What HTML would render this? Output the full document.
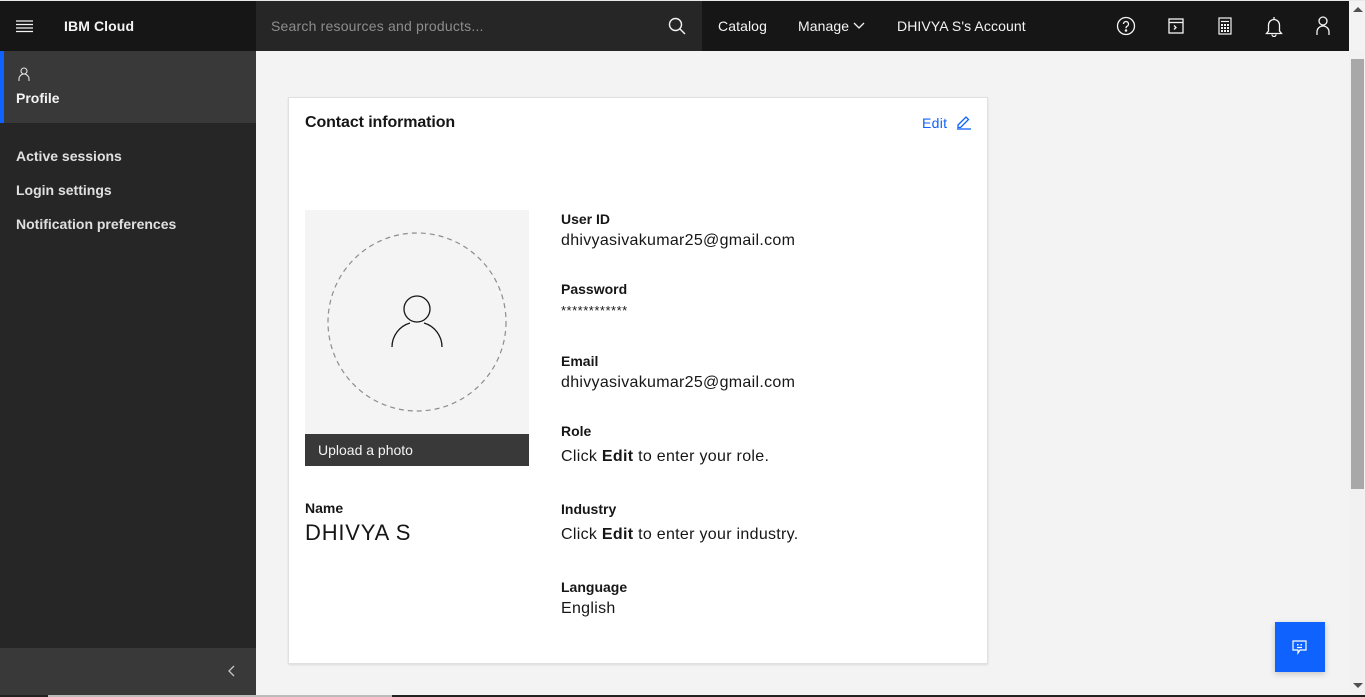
<!DOCTYPE html>
<html><head><meta charset="utf-8"><style>
*{box-sizing:border-box;margin:0;padding:0}
body{width:1365px;height:697px;overflow:hidden;background:#f3f3f3;font-family:"Liberation Sans",sans-serif;position:relative}
.hdr{position:absolute;left:0;top:1px;width:1349px;height:50px;background:#161616;color:#f4f4f4}
.top0{position:absolute;left:0;top:0;width:1365px;height:1px;background:#e8e8e8}
.search{position:absolute;left:256px;top:0;width:446px;height:50px;background:#262626}
.search span{position:absolute;left:15px;top:17px;color:#8d8d8d;font-size:14px;letter-spacing:.2px}
.ht{position:absolute;top:17px;font-size:14px;color:#f4f4f4;letter-spacing:.1px}
.side{position:absolute;left:0;top:51px;width:256px;height:646px;background:#262626}
.prof{position:absolute;left:0;top:0;width:256px;height:72px;background:#393939;border-left:4px solid #0f62fe}
.side .it{position:absolute;left:16px;color:#e0e0e0;font-size:14px;font-weight:bold}
.sbot{position:absolute;left:0;top:597px;width:256px;height:49px;background:#393939}
.card{position:absolute;left:288px;top:97px;width:700px;height:567px;background:#fff;border:1px solid #e0e0e0;box-shadow:0 1px 2px rgba(0,0,0,.1)}
.lbl{position:absolute;font-size:14px;font-weight:bold;color:#161616}
.val{position:absolute;font-size:16px;color:#161616;letter-spacing:.3px}
.sb{position:absolute;left:1349px;top:51px;width:16px;height:645px;background:#f1f1f1}
.thumb{position:absolute;left:1351px;top:59px;width:13px;height:430px;background:#a8a8a8}
</style></head><body>
<div class="top0"></div>
<div class="hdr">
 <svg style="position:absolute;left:16px;top:18px" width="17" height="14"><g stroke="#f4f4f4" stroke-width="1.3"><line x1="0" y1="2" x2="17" y2="2"/><line x1="0" y1="5.5" x2="17" y2="5.5"/><line x1="0" y1="9" x2="17" y2="9"/><line x1="0" y1="12.5" x2="17" y2="12.5"/></g></svg>
 <div class="ht" style="left:64px;font-weight:bold">IBM Cloud</div>
 <div class="search"><span>Search resources and products...</span>
  <svg style="position:absolute;left:412px;top:16px" width="18" height="18" fill="none" stroke="#f4f4f4" stroke-width="1.4"><circle cx="7.5" cy="7.5" r="6"/><line x1="12" y1="12" x2="17" y2="17"/></svg></div>
 <div class="ht" style="left:718px">Catalog</div>
 <div class="ht" style="left:798px">Manage</div>
 <svg style="position:absolute;left:853px;top:21px" width="12" height="8" fill="none" stroke="#f4f4f4" stroke-width="1.3"><path d="M1 1l5 5 5-5"/></svg>
 <div class="ht" style="left:897px">DHIVYA S's Account</div>
 <svg style="position:absolute;left:1116px;top:15px" width="20" height="20" fill="none" stroke="#f4f4f4" stroke-width="1.3"><circle cx="10" cy="10" r="8.5"/><path d="M7.5 8a2.5 2.5 0 1 1 3.5 2.3c-.8.4-1 1-1 1.9"/><circle cx="10" cy="14.5" r=".6" fill="#f4f4f4"/></svg>
 <svg style="position:absolute;left:1168px;top:17px" width="16" height="17" fill="none" stroke="#f4f4f4" stroke-width="1.3"><rect x="1" y="1" width="14" height="14"/><line x1="1" y1="4.5" x2="15" y2="4.5"/><path d="M6 7.5l2 2-2 2"/></svg>
 <svg style="position:absolute;left:1218px;top:16px" width="14" height="18" fill="none" stroke="#f4f4f4" stroke-width="1.2"><rect x="1" y="1" width="12" height="16"/><line x1="3" y1="4.5" x2="11" y2="4.5"/><g fill="#f4f4f4" stroke="none"><rect x="3" y="7" width="2" height="2"/><rect x="6" y="7" width="2" height="2"/><rect x="9" y="7" width="2" height="2"/><rect x="3" y="10" width="2" height="2"/><rect x="6" y="10" width="2" height="2"/><rect x="9" y="10" width="2" height="2"/><rect x="3" y="13" width="2" height="2"/><rect x="6" y="13" width="2" height="2"/><rect x="9" y="13" width="2" height="2"/></g></svg>
 <svg style="position:absolute;left:1265px;top:15px" width="18" height="21" fill="none" stroke="#f4f4f4" stroke-width="1.3"><path d="M9 1v2M3.5 15V9a5.5 5.5 0 0 1 11 0v6l2 2.5h-15z"/><path d="M7 18.5a2 2 0 0 0 4 0"/></svg>
 <svg style="position:absolute;left:1316px;top:15px" width="14" height="20" fill="none" stroke="#f4f4f4" stroke-width="1.3"><circle cx="7" cy="5" r="4"/><path d="M1 19v-3a6 6 0 0 1 12 0v3"/></svg>
</div>
<div class="side">
 <div class="prof">
  <svg style="position:absolute;left:14px;top:16px" width="12" height="15" fill="none" stroke="#e0e0e0" stroke-width="1.1"><circle cx="6" cy="4" r="3"/><path d="M1 14v-2a5 5 0 0 1 10 0v2"/></svg>
  <div style="position:absolute;left:12px;top:39px;color:#f4f4f4;font-size:14px;font-weight:bold">Profile</div>
 </div>
 <div class="it" style="top:97px">Active sessions</div>
 <div class="it" style="top:131px">Login settings</div>
 <div class="it" style="top:165px">Notification preferences</div>
 <div class="sbot"><svg style="position:absolute;left:228px;top:17px" width="8" height="12" fill="none" stroke="#c6c6c6" stroke-width="1.3"><path d="M6 1L1 6l5 5"/></svg></div>
</div>
<div class="card">
 <div style="position:absolute;left:16px;top:16px;font-size:16px;color:#161616;font-weight:bold;letter-spacing:-.1px">Contact information</div>
 <div style="position:absolute;left:633px;top:17px;font-size:14px;color:#0f62fe;letter-spacing:.3px">Edit</div>
 <svg style="position:absolute;left:667px;top:16px" width="16" height="16" fill="none" stroke="#0f62fe" stroke-width="1.3"><path d="M2 11l8-8 2.5 2.5-8 8H2z"/><line x1="1" y1="15" x2="15" y2="15"/></svg>
 <div style="position:absolute;left:16px;top:112px;width:224px;height:224px;background:#f4f4f4">
  <svg style="position:absolute;left:22px;top:22px" width="180" height="180" fill="none"><circle cx="90" cy="90" r="89" stroke="#8d8d8d" stroke-width="1.2" stroke-dasharray="5 4"/><circle cx="90" cy="77" r="13" stroke="#161616" stroke-width="1.3"/><path d="M65 115a25 25 0 0 1 18-24M115 115a25 25 0 0 0 -18-24" stroke="#161616" stroke-width="1.3"/></svg>
  <div style="position:absolute;left:0;top:224px;width:224px;height:32px;background:#393939;color:#f4f4f4;font-size:14px;padding:8px 13px">Upload a photo</div>
 </div>
 <div class="lbl" style="left:16px;top:402px">Name</div>
 <div class="val" style="left:16px;top:422px;font-size:22px;letter-spacing:.8px">DHIVYA S</div>
 <div class="lbl" style="left:272px;top:113px">User ID</div>
 <div class="val" style="left:272px;top:134px">dhivyasivakumar25@gmail.com</div>
 <div class="lbl" style="left:272px;top:183px">Password</div>
 <div class="val" style="left:272px;top:205px;font-size:13px;letter-spacing:.5px">************</div>
 <div class="lbl" style="left:272px;top:255px">Email</div>
 <div class="val" style="left:272px;top:276px">dhivyasivakumar25@gmail.com</div>
 <div class="lbl" style="left:272px;top:325px">Role</div>
 <div class="val" style="left:272px;top:350px">Click <b>Edit</b> to enter your role.</div>
 <div class="lbl" style="left:272px;top:403px">Industry</div>
 <div class="val" style="left:272px;top:428px">Click <b>Edit</b> to enter your industry.</div>
 <div class="lbl" style="left:272px;top:481px">Language</div>
 <div class="val" style="left:272px;top:502px">English</div>
</div>
<div style="position:absolute;left:1275px;top:622px;width:50px;height:50px;background:#0f62fe;box-shadow:0 2px 6px rgba(0,0,0,.2)">
 <svg style="position:absolute;left:17px;top:18px" width="16" height="16" fill="none" stroke="#fff" stroke-width="1.2"><path d="M1 1h13v9H8l-2 3v-3H1z"/><rect x="5" y="4" width="1.5" height="1.5" fill="#fff" stroke="none"/><rect x="8.5" y="4" width="1.5" height="1.5" fill="#fff" stroke="none"/><path d="M5 7.5h5"/></svg>
</div>
<div class="sb"></div><div class="thumb"></div>
<svg style="position:absolute;left:1353px;top:683px" width="10" height="6"><path d="M0 0h10L5 5z" fill="#505050"/></svg>
<svg style="position:absolute;left:1353px;top:7px" width="10" height="6"><path d="M0 5h10L5 0z" fill="#505050"/></svg>
<div style="position:absolute;left:0;top:695px;width:1365px;height:2px;background:#222"></div>
<div style="position:absolute;left:48px;top:695px;width:344px;height:2px;background:#bbb"></div>
</body></html>
